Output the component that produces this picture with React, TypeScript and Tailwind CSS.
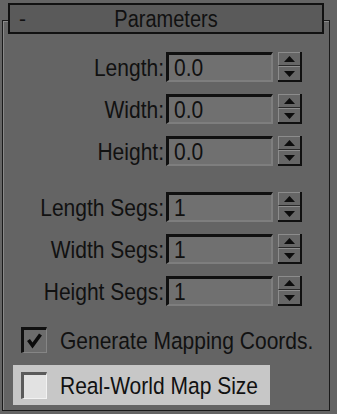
import React from "react";

const font = { fontFamily: '"Liberation Sans", Arial, sans-serif' };

function Spinner() {
  return (
    <div className="ml-[5px] flex h-[30px] w-[24px] flex-col border-r-2 border-b-2 border-[#101010] bg-[#666666]">
      <div className="flex h-[14px] items-center justify-center border-t border-l border-b border-t-[#8c8c8c] border-l-[#8c8c8c] border-b-[#2a2a2a]">
        <svg width="11" height="6" viewBox="0 0 11 6">
          <polygon points="5.5,0 11,6 0,6" fill="#0c0c0c" />
        </svg>
      </div>
      <div className="flex flex-1 items-center justify-center border-t border-l border-[#8c8c8c]">
        <svg width="11" height="6" viewBox="0 0 11 6">
          <polygon points="0,0 11,0 5.5,6" fill="#0c0c0c" />
        </svg>
      </div>
    </div>
  );
}

function Row({ label, value, className = "" }: { label: string; value: string; className?: string }) {
  return (
    <div className={"flex h-[30px] items-center " + className}>
      <div className="w-[161px] text-right text-[21px] leading-none text-[#111111]">
        <span className="inline-block scale-y-[1.15]">{label}</span>
      </div>
      <div className="ml-[2px] flex h-[30px] w-[107px] items-center border-t-[3px] border-l-[3px] border-r-2 border-b-2 border-t-[#101010] border-l-[#101010] border-r-[#7e7e7e] border-b-[#7e7e7e] bg-[#707070] pl-[5px] text-[21px] leading-none text-[#111111]">
        <span className="inline-block scale-y-[1.15]">{value}</span>
      </div>
      <Spinner />
    </div>
  );
}

export default function App() {
  return (
    <div className="h-[414px] w-[337px] overflow-hidden bg-[#646464] pt-[20px] pl-[2px]" style={font}>
      <div className="flex h-[391px] w-[328px] flex-col border border-[#1a1a1a] shadow-[inset_1px_1px_0_#8a8a8a]">
        <div className="-mt-[18px] ml-[5px] flex h-[31px] w-[316px] items-center border-2 border-[#111111] bg-[#5a5a5a] pl-[9px] text-[#111111]">
          <span className="w-[10px] text-[21px] leading-none">-</span>
          <span className="flex-1 pr-[19px] text-center text-[20px] leading-none">
            <span className="inline-block scale-y-[1.15]">Parameters</span>
          </span>
        </div>

        <Row label="Length:" value="0.0" className="mt-[18px]" />
        <Row label="Width:" value="0.0" className="mt-[12px]" />
        <Row label="Height:" value="0.0" className="mt-[12px]" />

        <Row label="Length Segs:" value="1" className="mt-[26px]" />
        <Row label="Width Segs:" value="1" className="mt-[12px]" />
        <Row label="Height Segs:" value="1" className="mt-[12px]" />

        <div className="mt-[21px] ml-[18px] flex h-[26px] items-center">
          <div className="relative h-[26px] w-[26px] border-t-[3px] border-l-[3px] border-r border-b border-t-[#101010] border-l-[#101010] border-r-[#858585] border-b-[#858585] bg-[#6c6c6c]">
            <svg className="absolute left-[1px] top-[1px]" width="20" height="20" viewBox="0 0 20 20">
              <polyline points="3.5,9 7.5,14.5 15.5,3.5" fill="none" stroke="#0a0a0a" strokeWidth="3.6" strokeLinejoin="miter" />
            </svg>
          </div>
          <span className="ml-[13px] inline-block scale-y-[1.15] text-[21px] leading-none text-[#111111]">
            Generate Mapping Coords.
          </span>
        </div>

        <div className="mt-[12px] ml-[10px] flex h-[40px] w-[257px] items-center bg-[#c7c7c7] pl-[8px]">
          <div className="h-[27px] w-[26px] border-t-[3px] border-l-[3px] border-r border-b border-t-[#5a5a5a] border-l-[#5a5a5a] border-r-[#f2f2f2] border-b-[#f2f2f2] bg-[#e2e2e2]" />
          <span className="ml-[13px] inline-block scale-y-[1.15] text-[21px] leading-none text-[#111111]">
            Real-World Map Size
          </span>
        </div>
      </div>
    </div>
  );
}
